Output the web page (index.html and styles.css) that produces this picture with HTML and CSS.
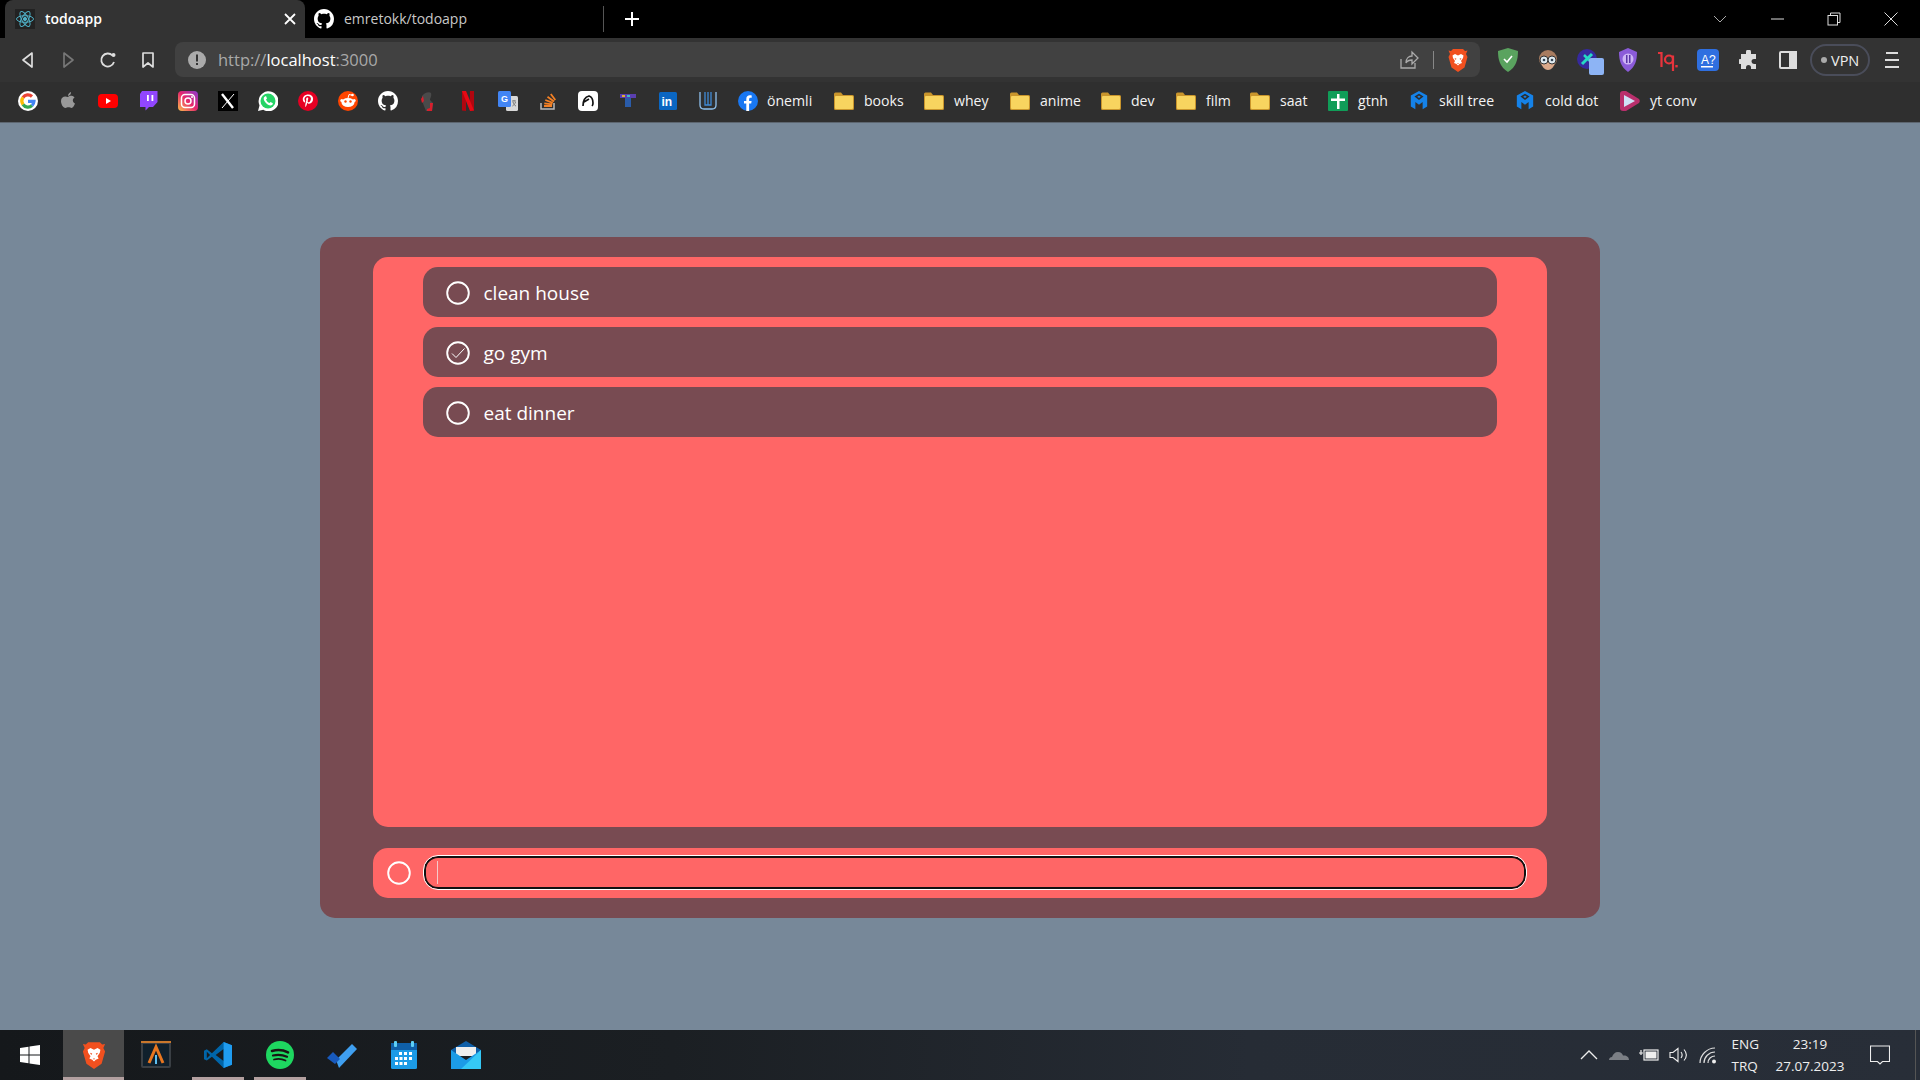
FILE: index.html
```html
<!DOCTYPE html>
<html lang="en">
<head>
<meta charset="utf-8">
<title>todoapp</title>
<link rel="stylesheet" href="styles.css">
</head>
<body>
<svg class="defs" aria-hidden="true">
  <symbol id="gh" viewBox="0 0 16 16"><path fill="#fff" d="M8 0C3.58 0 0 3.58 0 8c0 3.54 2.29 6.53 5.47 7.59.4.07.55-.17.55-.38 0-.19-.01-.82-.01-1.49-2.01.37-2.53-.49-2.69-.94-.09-.23-.48-.94-.82-1.13-.28-.15-.68-.52-.01-.53.63-.01 1.08.58 1.23.82.72 1.21 1.87.87 2.33.66.07-.52.28-.87.51-1.07-1.78-.2-3.64-.89-3.64-3.95 0-.87.31-1.59.82-2.15-.08-.2-.36-1.02.08-2.12 0 0 .67-.21 2.2.82.64-.18 1.32-.27 2-.27.68 0 1.36.09 2 .27 1.53-1.04 2.2-.82 2.2-.82.44 1.1.16 1.92.08 2.12.51.56.82 1.27.82 2.15 0 3.07-1.87 3.75-3.65 3.95.29.25.54.73.54 1.48 0 1.07-.01 1.93-.01 2.2 0 .21.15.46.55.38A8.013 8.013 0 0016 8c0-4.42-3.58-8-8-8z"/></symbol>
  <symbol id="brave" viewBox="0 0 20 24"><path fill="#f1501f" d="M5 1h10l2 2 2.500-.500L18 6l1.500 3-3 10.500L10 24l-6.500-4.500L.5 9 2 6 .5 2.500 3 3z"/><path fill="#fff" d="M10 7.500 7 6 4.500 7.500 5 10l2 3-1 2 2.500 1 1.500 1.500L11.500 16l2.500-1-1-2 2-3 .5-2.500L13 6z"/><path fill="#f1501f" d="M6.500 10l2 .8-.8 1.200zM13.500 10l-2 .8.8 1.200zM9 15h2l-1 1z"/></symbol>
  <symbol id="folder" viewBox="0 0 20 18"><path fill="#c9952c" d="M0 2a1.500 1.500 0 0 1 1.500-1.500H7L9 3h9.500A1.500 1.500 0 0 1 20 4.500v12a1.500 1.500 0 0 1-1.500 1.500h-17A1.500 1.500 0 0 1 0 16.500z"/><rect fill="#f8d45f" x="1" y="4" width="18" height="13" rx="1"/></symbol>
  <symbol id="cube" viewBox="0 0 20 22"><path fill="#1582e8" d="M10 0l9 5v12l-5 3v-8l-4 3-4-3v8l-5-3V5z"/><path fill="#2c2c2c" d="M10 3 5 6l5 4 5-4z"/><path fill="#1582e8" d="M10 5 8 6.200l2 1.600 2-1.600z"/></symbol>
</svg>

<header class="chrome">
  <div class="tabbar">
    <div class="tab tab-active">
      <svg class="fav" viewBox="0 0 20 20" fill="none" stroke="#4fb0c6" stroke-width="1"><rect x="0" y="0" width="20" height="20" fill="#222" stroke="none"/><ellipse cx="10" cy="10" rx="8.500" ry="3.300"/><ellipse cx="10" cy="10" rx="8.500" ry="3.300" transform="rotate(60 10 10)"/><ellipse cx="10" cy="10" rx="8.500" ry="3.300" transform="rotate(120 10 10)"/><circle cx="10" cy="10" r="1.600" fill="#4fb0c6"/></svg>
      <span class="tab-title">todoapp</span>
      <svg class="tab-x" viewBox="0 0 12 12" stroke="#fff" stroke-width="1.800"><path d="M1 1l10 10M11 1 1 11"/></svg>
    </div>
    <div class="tab tab-idle">
      <svg class="fav"><use href="#gh"/></svg>
      <span class="tab-title2">emretokk/todoapp</span>
    </div>
    <div class="tab-sep"></div>
    <svg class="plus" viewBox="0 0 16 16" stroke="#fff" stroke-width="2"><path d="M8 1v14M1 8h14"/></svg>
    <div class="winctl">
      <svg class="wc" viewBox="0 0 14 14" fill="none" stroke="#aaa"><path d="M1 4l6 6 6-6"/></svg>
      <svg class="wc" viewBox="0 0 14 14" fill="none" stroke="#ddd"><path d="M1 7h13"/></svg>
      <svg class="wc" viewBox="0 0 14 14" fill="none" stroke="#ddd"><rect x="1" y="3.500" width="9.500" height="9.500"/><path d="M3.500 3.500V1H13v9.500h-2.500"/></svg>
      <svg class="wc" viewBox="0 0 14 14" fill="none" stroke="#ddd"><path d="M.5.500l13 13M13.500.500l-13 13"/></svg>
    </div>
  </div>

  <div class="toolbar">
    <span class="tb"><svg class="ic18" viewBox="0 0 18 18" fill="none" stroke="#ddd" stroke-width="1.700"><path d="M13 2 4 9l9 7z" stroke-linejoin="round"/></svg></span>
    <span class="tb"><svg class="ic18" viewBox="0 0 18 18" fill="none" stroke="#777" stroke-width="1.700"><path d="M5 2l9 7-9 7z" stroke-linejoin="round"/></svg></span>
    <span class="tb"><svg class="ic18" viewBox="0 0 18 18" fill="none" stroke="#ddd" stroke-width="1.800"><path d="M15 11a6.500 6.500 0 1 1-1.500-6.500"/><circle cx="14.500" cy="4" r="2" fill="#ddd" stroke="none"/></svg></span>
    <span class="tb"><svg class="ic18" viewBox="0 0 18 18" fill="none" stroke="#ddd" stroke-width="1.700"><path d="M4 2h10v14l-5-4-5 4z" stroke-linejoin="round"/></svg></span>
    <div class="omni">
      <svg class="ic18 omni-alert" viewBox="0 0 18 18"><circle cx="9" cy="9" r="9" fill="#aaa"/><rect x="8" y="3.500" width="2" height="7" fill="#333"/><rect x="8" y="12" width="2" height="2" fill="#333"/></svg>
      <span class="url">http://<b>localhost</b>:3000</span>
      <svg class="ic20" viewBox="0 0 20 20" fill="none" stroke="#aaa" stroke-width="1.300"><path d="M2 9v9h14v-5M7 13c0-5 3-7 6-7V2l6 6-6 6v-4c-3 0-5 1-6 3z"/></svg>
      <span class="omni-sep"></span>
      <svg class="brave-o"><use href="#brave"/></svg>
    </div>
    <span class="tb tb-first"><svg class="ic22" viewBox="0 0 20 24"><path fill="#5aa35f" d="M10 0l10 3c0 9-2 16-10 21C2 19 0 12 0 3z"/><path fill="none" stroke="#fff" stroke-width="1.600" d="M6 11l3 3 5-6"/></svg></span>
    <span class="tb"><svg class="ic22" viewBox="0 0 22 22"><circle cx="11" cy="10" r="9" fill="#a87c60"/><path fill="#d9a88a" d="M4 10h14c0 7-3 11-7 11s-7-4-7-11z"/><circle cx="7" cy="11" r="4" fill="#dfeaf0" stroke="#333"/><circle cx="15" cy="11" r="4" fill="#dfeaf0" stroke="#333"/><circle cx="7" cy="11" r="1.300" fill="#345"/><circle cx="15" cy="11" r="1.300" fill="#345"/></svg></span>
    <span class="tb tb-rel"><svg class="ic22" viewBox="0 0 22 22"><circle cx="10" cy="10" r="10" fill="#36299e"/><path stroke="#27d9c4" stroke-width="3" d="M5 15 15 5"/><path stroke="#27d9c4" stroke-width="2.500" d="M7 6l8 8"/></svg><span class="ext-badge"></span></span>
    <span class="tb"><svg class="ic22" viewBox="0 0 20 24"><path fill="#8b5bd9" d="M10 0l9 4c0 9-2 15-9 20C3 19 1 13 1 4z"/><circle cx="10" cy="11" r="5.500" fill="#cdb4f5"/><rect x="8" y="7" width="1.500" height="8" fill="#5a35a8"/><rect x="11" y="7" width="1.500" height="8" fill="#5a35a8"/></svg></span>
    <span class="tb"><svg class="ic22" viewBox="0 0 22 22" fill="none" stroke="#e8343c" stroke-width="2.200"><path d="M1 4h3.500v14"/><circle cx="12" cy="10.500" r="4"/><path d="M16 6.500V22"/><path stroke-width="2.400" d="M19.500 16v2.400"/></svg></span>
    <span class="tb"><svg class="ic22" viewBox="0 0 22 22"><rect width="22" height="22" rx="4" fill="#2f6fe0"/><text class="logo-a" x="4" y="15">A?</text><rect x="4" y="17" width="12" height="1.500" fill="#fff"/></svg></span>
    <span class="tb tb-puzzle"><svg class="ic20" viewBox="0 0 20 20"><path fill="#ddd" d="M7 2a2.500 2.500 0 0 1 5 0v2h5v5h-2a2.500 2.500 0 0 0 0 5h2v5h-5v-1.500a2.500 2.500 0 0 0-5 0V19H2v-5h-.5a2.500 2.500 0 0 1 0-5H2V4h5z"/></svg></span>
    <span class="tb"><svg class="ic18" viewBox="0 0 18 18" fill="none" stroke="#ddd" stroke-width="2"><rect x="1" y="1" width="16" height="16" rx="1"/><rect x="11" y="1" width="6" height="16" fill="#ddd"/></svg></span>
    <span class="vpn"><i class="vpn-dot"></i>VPN</span>
    <span class="tb"><svg class="ic18" viewBox="0 0 18 18" stroke="#ddd" stroke-width="1.800"><path d="M3 2h12M2 9h14M2 16h14"/></svg></span>
  </div>

  <nav class="bookmarks">
    <span class="bm"><svg class="ic20" viewBox="0 0 20 20" fill="none" stroke-width="3.200"><circle cx="10" cy="10" r="10" fill="#fff" stroke="none"/><path stroke="#ea4335" d="M5 6.500A6 6 0 0 1 14 5.500"/><path stroke="#fbbc05" d="M5 6.500a6 6 0 0 0 0 7"/><path stroke="#34a853" d="M5 13.500a6 6 0 0 0 9 1"/><path stroke="#4285f4" d="M10 10.300h6a6 6 0 0 1-2 4.200"/></svg></span>
    <span class="bm"><svg class="ic20" viewBox="0 0 20 20"><path fill="#999" d="M10 6c1-1 3-1.500 4.500-1 1 .3 1.700 1 2 1.500-2.500 1.500-2 5 .5 6-.7 2-2 4.500-3.500 4.500-1 0-1.500-.7-3-.7s-2 .7-3 .7C5 17 3 13 3 10c0-4 3.500-5.500 7-4zM10 5c0-2 1.500-3.500 3-4 .2 2-1.300 3.800-3 4z"/></svg></span>
    <span class="bm"><svg class="ic20" viewBox="0 0 20 20"><rect y="3" width="20" height="14" rx="4" fill="#f00"/><path fill="#fff" d="M8 7l5 3-5 3z"/></svg></span>
    <span class="bm"><svg class="ic20" viewBox="0 0 20 20"><path fill="#9146ff" d="M4 0h15.500v11L15 16h-4l-3.500 3.500V16H2V3z"/><path fill="#fff" d="M9 4h1.800v6H9zM13.500 4h1.800v6h-1.800z"/></svg></span>
    <span class="bm"><svg class="ic20" viewBox="0 0 20 20"><defs><linearGradient id="ig" x1="0" y1="1" x2="1" y2="0"><stop offset="0" stop-color="#fdc04b"/><stop offset=".5" stop-color="#e6286c"/><stop offset="1" stop-color="#8a3ad0"/></linearGradient></defs><rect width="20" height="20" rx="4" fill="url(#ig)"/><rect x="3.500" y="3.500" width="13" height="13" rx="3.500" fill="none" stroke="#fff" stroke-width="1.500"/><circle cx="10" cy="10" r="3" fill="none" stroke="#fff" stroke-width="1.500"/><circle cx="14" cy="6" r="1" fill="#fff"/></svg></span>
    <span class="bm"><svg class="ic20" viewBox="0 0 20 20"><rect width="20" height="20" fill="#000"/><path stroke="#fff" stroke-width="2.400" d="M4 3l11 14"/><path stroke="#fff" d="M16 3 4 17"/></svg></span>
    <span class="bm"><svg class="ic20" viewBox="0 0 20 20"><path fill="#fff" d="M0 20l1.500-5.500A10 10 0 1 1 5.300 18.800z"/><circle cx="10" cy="10" r="7.500" fill="#25d366"/><path fill="#fff" d="M7 5.500c-2 1-1.500 3.500.5 6s5 3.500 6.500 2.500c1-.7 1-1.800.5-2l-2-1-1 1c-1.500-.5-3-2-3.500-3.500l1-1-1-2.500z"/></svg></span>
    <span class="bm"><svg class="ic20" viewBox="0 0 20 20"><circle cx="10" cy="10" r="10" fill="#e60023"/><path fill="#fff" d="M10.300 3.500c-3.500 0-5.500 2.300-5.500 4.800 0 1.300.7 2.700 1.700 3.100.3.100.4 0 .5-.3l.2-.8c0-.2 0-.3-.1-.5-.3-.4-.6-1-.6-1.700 0-1.700 1.300-3.200 3.400-3.200 1.900 0 3 1.200 3 2.700 0 2-1 3.700-2.200 3.700-.7 0-1.200-.6-1-1.300.2-.9.6-1.800.6-2.400 0-.6-.3-1-.9-1-.7 0-1.300.7-1.300 1.700 0 .6.200 1 .2 1l-.9 3.600c-.2.900-.1 2.300 0 3.100h.2c.4-.6 1-1.700 1.200-2.500l.4-1.700c.3.500 1 1 1.900 1 2.400 0 4-2.200 4-5 0-2.500-2-4.300-4.800-4.300z"/></svg></span>
    <span class="bm"><svg class="ic20" viewBox="0 0 20 20"><circle cx="10" cy="10" r="10" fill="#ff4500"/><ellipse cx="10" cy="11.500" rx="6.500" ry="4.500" fill="#fff"/><circle cx="3.800" cy="9.500" r="1.500" fill="#fff"/><circle cx="16.200" cy="9.500" r="1.500" fill="#fff"/><circle cx="7.500" cy="10.500" r="1.200" fill="#ff4500"/><circle cx="12.500" cy="10.500" r="1.200" fill="#ff4500"/><path stroke="#fff" fill="none" d="M10 7l1-3.500 3 .7"/><circle cx="14.500" cy="4" r="1.300" fill="#fff"/></svg></span>
    <span class="bm"><svg class="ic20"><use href="#gh"/></svg></span>
    <span class="bm"><svg class="ic20" viewBox="0 0 20 20"><path fill="#4a4a4a" d="M4 5c2-3 7-5 9-3 1 3-1 5-1 7l3 3-1 8H8L6 15 4 10z"/><path fill="#d81f2d" d="M12 12l3 0-1 8H9l0-2 3-1zM5 5 3 8l1 4 2-2z"/></svg></span>
    <span class="bm"><svg class="ic20" viewBox="0 0 20 20"><path fill="#b1060f" d="M4 0h4v20l-4-.5z"/><path fill="#b1060f" d="M12 0h4v19.500L12 20z"/><path fill="#e50914" d="M4 0h4l8 19.500L12 20z"/></svg></span>
    <span class="bm"><svg class="ic20" viewBox="0 0 20 20"><rect x="8" y="5" width="12" height="15" rx="1.500" fill="#d9d9d9"/><rect x="0" y="0" width="13" height="16" rx="1.500" fill="#4285f4"/><text class="logo-g" x="3" y="11">G</text><path stroke="#777" fill="none" d="M14 10h4M16 9v1M15 11c.5 2 2 4 3 4M17.500 11c-.5 2-2 3.500-3 4"/></svg></span>
    <span class="bm"><svg class="ic20" viewBox="0 0 20 20"><path fill="none" stroke="#bbb" stroke-width="1.500" d="M3 12v6h13v-6"/><path stroke="#f48024" stroke-width="1.800" d="M6 15h8M6.300 12.300l8 1M7.300 9l7.500 2.800M9.500 5.800l6.500 4.700M12.800 3l4.500 6"/></svg></span>
    <span class="bm"><svg class="ic20" viewBox="0 0 20 20"><rect width="20" height="20" rx="4" fill="#fff"/><path fill="none" stroke="#111" stroke-width="1.700" d="M5 15c0-5 2-9 6-10 3 1 4 4 4 7 0 2-1 3-1 3M11 8l-5 3"/></svg></span>
    <span class="bm"><svg class="ic20" viewBox="0 0 20 20"><rect x="2" y="3" width="16" height="4" fill="#5a3fb0"/><rect x="7" y="7" width="6" height="9" fill="#2a5caa"/><rect x="4" y="4" width="3" height="2" fill="#e0b030"/><rect x="9" y="4" width="3" height="2" fill="#3fc0c0"/></svg></span>
    <span class="bm"><svg class="ic20" viewBox="0 0 20 20"><rect x="1" y="1" width="18" height="18" rx="1.500" fill="#0a66c2"/><text class="logo-in" x="3.500" y="15">in</text></svg></span>
    <span class="bm"><svg class="ic20" viewBox="0 0 20 20" fill="none" stroke="#8fc1ee" stroke-width="1.300"><path d="M2 1v13c0 3 2 4 4 4h8c2 0 4-1 4-4V1"/><path stroke="#3f8ad6" d="M7 1v13h6V1M10 1v13"/></svg></span>
    <span class="bm bm-text bm-first"><svg class="ic20" viewBox="0 0 20 20"><circle cx="10" cy="10" r="10" fill="#1877f2"/><path fill="#fff" d="M8.300 20v-7.500H6V10h2.300V8c0-2.400 1.400-3.700 3.500-3.700 1 0 1.900.2 1.900.2v2.200h-1.100c-1.100 0-1.500.7-1.500 1.400V10h2.500l-.4 2.500h-2.100V20z"/></svg><span>önemli</span></span>
    <span class="bm bm-text"><svg class="folder"><use href="#folder"/></svg><span>books</span></span>
    <span class="bm bm-text"><svg class="folder"><use href="#folder"/></svg><span>whey</span></span>
    <span class="bm bm-text"><svg class="folder"><use href="#folder"/></svg><span>anime</span></span>
    <span class="bm bm-text"><svg class="folder"><use href="#folder"/></svg><span>dev</span></span>
    <span class="bm bm-text"><svg class="folder"><use href="#folder"/></svg><span>film</span></span>
    <span class="bm bm-text"><svg class="folder"><use href="#folder"/></svg><span>saat</span></span>
    <span class="bm bm-text"><svg class="ic20" viewBox="0 0 20 20"><rect width="20" height="20" rx="1" fill="#109d58"/><path fill="#fff" d="M9 3h2.500v4.500H17V10h-5.500v8H9v-8H3V7.500h6z"/></svg><span>gtnh</span></span>
    <span class="bm bm-text"><svg class="ic20"><use href="#cube"/></svg><span>skill tree</span></span>
    <span class="bm bm-text"><svg class="ic20"><use href="#cube"/></svg><span>cold dot</span></span>
    <span class="bm bm-text"><svg class="ic20" viewBox="0 0 20 20"><path fill="#b92f6c" d="M3 0h3l13 8c1 1 1 3 0 4L6 20H3c-2 0-3-1-3-3V3c0-2 1-3 3-3z"/><path fill="#cfe0f5" d="M4 4l11 6-11 6z"/></svg><span>yt conv</span></span>
  </nav>
</header>

<main class="page">
  <section class="card">
    <ul class="list">
      <li class="item"><svg class="check" viewBox="0 0 24 24"><circle cx="12" cy="12" r="10.800"/></svg><span>clean house</span></li>
      <li class="item"><svg class="check" viewBox="0 0 24 24"><circle cx="12" cy="12" r="10.800"/><path class="tick" d="M6 12.500l4 4 8.500-9"/></svg><span>go gym</span></li>
      <li class="item"><svg class="check" viewBox="0 0 24 24"><circle cx="12" cy="12" r="10.800"/></svg><span>eat dinner</span></li>
    </ul>
    <form class="adder">
      <svg class="check" viewBox="0 0 24 24"><circle cx="12" cy="12" r="10.800"/></svg>
      <input class="new-todo" type="text" aria-label="New todo">
    </form>
  </section>
</main>

<footer class="taskbar">
  <svg class="win" viewBox="0 0 20 20"><path fill="#fff" d="M0 3l8.500-1.200V9.500H0zM9.500 1.600 20 0v9.500H9.500zM0 10.500h8.500v7.700L0 17zM9.500 10.500H20V20L9.500 18.400z"/></svg>
  <span class="tk tk-active"><svg class="tk-ic"><use href="#brave"/></svg></span>
  <span class="tk"><svg class="tk-ic" viewBox="0 0 30 28"><rect x="0" y="0" width="30" height="27" rx="2" fill="#3a3f44"/><rect x="2" y="3" width="26" height="22" fill="#10202c"/><rect x="0" y="0" width="30" height="2" fill="#c9772c"/><path fill="none" stroke="#e8761f" stroke-width="3" d="M8 22 15 6l7 16"/><path stroke="#5fc0f0" stroke-width="2" d="M15 14v9"/></svg></span>
  <span class="tk tk-open"><svg class="tk-ic" viewBox="0 0 30 30"><path fill="#0065a9" d="M21 1 8.500 13 3 8.800 0 10.500v9L3 21l5.500-4.200L21 29l9-3.500V4.500zM21 8.500v13L12.500 15zM3 11.500 6.500 15 3 18.500z"/><path fill="#1f9cf0" d="M21 1l9 3.500v21L21 29z"/></svg></span>
  <span class="tk tk-open"><svg class="tk-ic" viewBox="0 0 28 28" fill="none" stroke="#191414" stroke-linecap="round"><circle cx="14" cy="14" r="14" fill="#1ed760" stroke="none"/><path stroke-width="2.600" d="M6 10c5-1.500 11-1.200 16 1.300"/><path stroke-width="2.200" d="M7 14.500c4.500-1.200 9.500-.8 14 1.200"/><path stroke-width="1.800" d="M8 18.500c4-1 8-.7 11.500 1"/></svg></span>
  <span class="tk"><svg class="tk-ic" viewBox="0 0 30 26"><path fill="#3f9ff0" d="M9 18 25 2l5 5L12 26z"/><path fill="#185abd" d="M0 16l6-6 7 7-5 5z"/></svg></span>
  <span class="tk"><svg class="tk-ic" viewBox="0 0 26 28"><rect y="2" width="26" height="26" rx="1.500" fill="#1c9be6"/><rect y="2" width="26" height="7" fill="#0f5fa8"/><rect x="3" y="0" width="3" height="6" rx="1" fill="#5fd0f5"/><rect x="20" y="0" width="3" height="6" rx="1" fill="#5fd0f5"/><path fill="#fff" d="M8 11h3v3H8zM13 11h3v3h-3zM18 11h3v3h-3zM4 16h3v3H4zM8.500 16h3v3h-3zM13 16h3v3h-3zM18 16h3v3h-3zM4 21h3v3H4zM8.500 21h3v3h-3zM13 21h3v3h-3z"/></svg></span>
  <span class="tk"><svg class="tk-ic" viewBox="0 0 30 28"><path fill="#0f5fa8" d="M15 0 30 9v5H0V9z"/><path fill="#eee" d="M5 6h20v9H5z"/><path fill="#1c9be6" d="M0 9l15 10L30 9v19H0z"/><path fill="#35c8f5" d="M30 9v19H10z"/></svg></span>
  <div class="tray">
    <svg class="tr" viewBox="0 0 18 18" fill="none" stroke="#eee" stroke-width="1.300"><path d="M1 13l8-8 8 8"/></svg>
    <svg class="tr" viewBox="0 0 20 18"><path fill="#7b7f85" d="M0 14c0-2 1.500-3 3-3 1-3 3-5 6-5 3 0 4 1.500 5 3.500 3-.5 6 1 6 4.500z"/></svg>
    <svg class="tr" viewBox="0 0 20 18" fill="none" stroke="#eee" stroke-width="1.200"><rect x="5" y="4" width="14" height="10"/><rect x="6.500" y="5.500" width="11" height="7" fill="#eee" stroke="none"/><path d="M0 7h4M2 4v5"/></svg>
    <svg class="tr" viewBox="0 0 20 18" fill="none" stroke="#eee" stroke-width="1.100"><path d="M1 6.500v5h3l5 4v-13l-5 4zM12 6c1.500 2 1.500 4 0 6M15 3.500c3 3.500 3 7.500 0 11"/></svg>
    <svg class="tr" viewBox="0 0 20 18" fill="none" stroke="#ddd" stroke-width="1.200"><path d="M1 17C1 9 8 2 16 2M5 17c0-6 5-11 11-11M9 17c0-4 3-7 7-7"/><circle cx="15" cy="15.500" r="2" fill="#eee" stroke="none"/></svg>
    <div class="lang"><span>ENG</span><span>TRQ</span></div>
    <div class="clock"><span>23:19</span><span>27.07.2023</span></div>
    <svg class="note" viewBox="0 0 20 20" fill="none" stroke="#eee" stroke-width="1.100"><path d="M.5 1h19v15.500h-7L10 19l-2.500-2.500h-7z"/></svg>
    <span class="show-desk"></span>
  </div>
</footer>
</body>
</html>
```

FILE: styles.css
```css
* { box-sizing: border-box; }
html, body { margin: 0; height: 100%; }
body {
  display: flex;
  flex-direction: column;
  height: 1080px;
  overflow: hidden;
  background: #778899;
  font-family: "Open Sans", "Noto Sans", sans-serif;
  color: #fff;
}
svg { display: block; flex: none; }
.defs { position: absolute; width: 0; height: 0; }
.ic18 { width: 18px; height: 18px; }
.ic20 { width: 20px; height: 20px; }
.ic22 { width: 22px; height: 24px; }

.chrome { flex: none; background: #2f2f2f; }

/* tabs */
.tabbar { display: flex; align-items: stretch; height: 38px; background: #000; padding-left: 5px; }
.tab { display: flex; align-items: center; }
.tab-active { width: 300px; background: #333; border-radius: 8px 8px 0 0; padding: 0 10px 0 10px; }
.fav { width: 20px; height: 20px; }
.tab-title { margin-left: 10px; padding-bottom: 2px; font-size: 14px; font-weight: 600; flex: 1; }
.tab-x { width: 12px; height: 12px; margin-right: -1px; }
.tab-idle { width: 298px; padding-left: 9px; }
.tab-title2 { margin-left: 10px; padding-bottom: 2px; font-size: 14px; color: #c8c8c8; }
.tab-sep { width: 1px; height: 26px; margin-top: 6px; background: #555; }
.plus { width: 16px; height: 16px; margin: 11px 0 0 20px; }
.winctl { margin-left: auto; display: flex; align-items: center; gap: 43px; padding-right: 22px; }
.wc { width: 14px; height: 14px; }

/* toolbar */
.toolbar { display: flex; align-items: center; height: 44px; padding: 0 8px 0 8px; background: #333; }
.tb { width: 40px; height: 30px; display: flex; align-items: center; justify-content: center; flex: none; }
.tb-first { margin-left: 8px; }
.tb-rel { position: relative; }
.tb-puzzle { padding-left: 2px; }
.ext-badge { position: absolute; right: 4px; bottom: 0; width: 15px; height: 17px; background: #8db4f5; border-radius: 2px; }
.omni {
  display: flex;
  align-items: center;
  width: 1305px;
  height: 35px;
  margin-left: 7px;
  margin-top: -1px;
  padding: 0 12px 0 13px;
  background: #414141;
  border-radius: 8px;
}
.url { margin-left: 12px; flex: 1; font-size: 16.500px; color: #a9a9a9; }
.url b { font-weight: 400; color: #fff; }
.omni-sep { width: 1px; height: 18px; background: #888; margin: 0 14px; }
.brave-o { width: 20px; height: 24px; }
.vpn {
  display: flex;
  align-items: center;
  gap: 4px;
  width: 60px;
  height: 32px;
  margin-left: 2px;
  padding-left: 9px;
  border: 2px solid #4a4d5a;
  border-radius: 16px;
  font-size: 14.500px;
  color: #eee;
}
.vpn-dot { width: 6px; height: 6px; border-radius: 50%; background: #aaa; }
.toolbar .vpn + .tb { margin-left: 2px; }

/* bookmarks */
.bookmarks {
  display: grid;
  grid-template-columns: repeat(18, 40px) 106px 90px 86px 91px 75px 74px 78px 81px 106px 105px auto;
  align-items: center;
  height: 41px;
  padding: 0 0 4px 8px;
  background: #2f2f2f;
  box-shadow: inset 0 -1px 0 #5d6670;
  font-size: 14.100px;
}
.bm { display: flex; justify-content: center; align-items: center; }
.bm-text { justify-content: flex-start; gap: 10px; white-space: nowrap; color: #f4f4f4; }
.bm-first { margin-left: 10px; gap: 9px; }
.folder { width: 20px; height: 18px; }
.logo-a { font: 400 12px "Liberation Sans", sans-serif; fill: #fff; }
.logo-g { font: 700 9px "Liberation Sans", sans-serif; fill: #fff; }
.logo-in { font: 700 12px "Liberation Sans", sans-serif; fill: #fff; }

/* app */
.page { flex: 1; display: flex; justify-content: center; align-items: flex-start; padding-top: 114px; }
.card {
  display: flex;
  flex-direction: column;
  gap: 21px;
  width: 1280px;
  height: 681px;
  padding: 20px 53px;
  background: #784b52;
  border-radius: 15px;
}
.list {
  flex: 1;
  display: flex;
  flex-direction: column;
  gap: 10px;
  margin: 0;
  padding: 10px 50px 0 49.500px;
  list-style: none;
  background: #ff6666;
  border-radius: 15px;
}
.item {
  display: flex;
  align-items: center;
  gap: 14px;
  height: 50px;
  padding: 1px 0 0 23px;
  background: #784b52;
  border-radius: 15px;
  font-size: 19px;
  color: #fff;
}
.check { width: 24px; height: 24px; fill: none; stroke: #fff; stroke-width: 1.900; }
.tick { stroke-width: 1; }
.adder {
  flex: none;
  display: flex;
  align-items: center;
  gap: 12px;
  height: 50px;
  padding: 0 20px 0 14px;
  background: #ff6666;
  border-radius: 15px;
}
.new-todo {
  flex: 1;
  height: 35px;
  margin-bottom: 1px;
  padding: 0;
  border: 1px solid #fff;
  border-radius: 15px;
  box-shadow: inset 0 0 0 2px #111;
  outline: none;
  background: linear-gradient(#f5c9c9, #f5c9c9) 13px 5px / 1px 23px no-repeat #ff6666;
}

/* taskbar */
.taskbar {
  flex: none;
  display: flex;
  align-items: stretch;
  height: 50px;
  background: linear-gradient(90deg, #15181b 0%, #1b1f23 35%, #262c35 65%, #282e38 100%);
}
.win { width: 20px; height: 20px; margin: 15px 23px 0 20px; }
.tk { position: relative; width: 62px; display: flex; align-items: center; justify-content: center; }
.tk-ic { width: 30px; height: 28px; }
.tk-active { width: 61px; background: #4a4a4a; }
.tk-active + .tk { margin-left: 1px; }
.tk-active::after, .tk-open::after {
  content: "";
  position: absolute;
  left: 5px;
  right: 5px;
  bottom: 0;
  height: 3px;
  background: #b3a0a0;
}
.tk-active::after { left: 0; right: 0; }
.tray { margin-left: auto; display: flex; align-items: center; }
.tr { width: 20px; height: 18px; margin-right: 10px; }
.lang, .clock { display: flex; flex-direction: column; gap: 5px; font-size: 13.500px; line-height: 17px; color: #eee; }
.lang { margin: 0 0 0 3px; }
.clock { width: 88px; margin-left: 7px; align-items: center; }
.note { width: 20px; height: 20px; margin-left: 16px; }
.show-desk { width: 1px; height: 50px; margin-left: 25px; margin-right: 4px; background: #555; }
```
